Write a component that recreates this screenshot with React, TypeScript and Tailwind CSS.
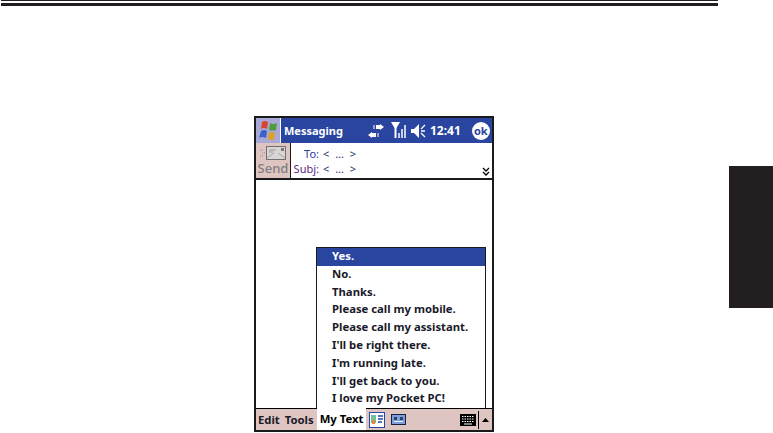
const font = "font-['Noto_Sans','Liberation_Sans',sans-serif]";

const replies = [
  'Yes.',
  'No.',
  'Thanks.',
  'Please call my mobile.',
  'Please call my assistant.',
  "I'll be right there.",
  "I'm running late.",
  "I'll get back to you.",
  'I love my Pocket PC!',
];

function WindowsFlag() {
  return (
    <svg width="21" height="21" viewBox="0 0 21 21">
      <path d="M4 2 Q7 0 10 2 L9 9 Q6 7 3 9 Z" fill="#d8452c" />
      <path d="M12 3 Q15 5 19 3 L18 10 Q14 11 11 10 Z" fill="#4e9a3c" />
      <path d="M3 11 Q6 9 9 11 L8 18 Q4 16 1 18 Z" fill="#3a62c4" />
      <path d="M11 12 Q14 13 17 12 L16 19 Q13 21 10 19 Z" fill="#e0a020" />
    </svg>
  );
}

function TitleIcons() {
  return (
    <>
      <svg width="16" height="14" viewBox="0 0 16 14" className="ml-[14px] text-white">
        <path d="M8 1 L12 1 L12 0 L16 3 L12 6 L12 5 L8 5 Z M8 9 L4 9 L4 8 L0 11 L4 14 L4 13 L8 13 Z" fill="currentColor" />
        <path d="M5 2 L7 2 M5 4 L7 4 M9 10 L11 10 M9 12 L11 12" stroke="currentColor" strokeWidth="1.2" />
      </svg>
      <svg width="15" height="17" viewBox="0 0 15 17" className="ml-[7px]">
        <path d="M0 0 L9 0 L5.5 6 L5.5 16 L3.5 16 L3.5 6 Z" fill="#fff" />
        <rect x="7" y="11" width="2" height="5" fill="#c5cfec" />
        <rect x="10" y="7" width="2" height="9" fill="#c5cfec" />
        <rect x="13" y="3" width="2" height="13" fill="#c5cfec" />
      </svg>
      <svg width="15" height="14" viewBox="0 0 15 14" className="ml-[5px]">
        <path d="M0 5 L3 5 L8 0 L8 14 L3 9 L0 9 Z" fill="#fff" />
        <path d="M14 1 L10 5 M10 7 L14 7 M10 9 L14 13" stroke="#fff" strokeWidth="1.3" fill="none" />
      </svg>
    </>
  );
}

function SendIcon() {
  return (
    <svg width="26" height="15" viewBox="0 0 26 15">
      <rect x="6.5" y="0.5" width="19" height="13" fill="#d9d5d5" stroke="#6f6f6f" />
      <path d="M7 12 L14 7 M25 12 L18 7" fill="none" stroke="#a5a5a5" />
      <rect x="21" y="2" width="3" height="3" fill="#777" />
      <path d="M9 4 H16 M9 6 H13" stroke="#999" />
      <path d="M0 4 H4 M2 7 H5 M0 10 H4" stroke="#8f8f8f" strokeDasharray="1 1" />
    </svg>
  );
}

function BottomIcons() {
  return (
    <div className="flex flex-1 items-center bg-[#dfc5c1] border-t border-black h-full">
      <svg width="16" height="16" viewBox="0 0 16 16" className="ml-[3px]">
        <rect x="0.5" y="0.5" width="15" height="15" fill="#fff" stroke="#2a45a8" />
        <rect x="2" y="3" width="5" height="8" fill="#6fc39a" />
        <rect x="3" y="8" width="3" height="4" fill="#e8843c" />
        <path d="M9 4 H14 M9 7 H14 M9 10 H13" stroke="#2a45a8" strokeWidth="1.4" />
      </svg>
      <svg width="15" height="11" viewBox="0 0 15 11" className="ml-[6px]">
        <rect x="0" y="0" width="15" height="11" fill="#16213a" />
        <rect x="1" y="1" width="13" height="9" fill="#7f9fdc" />
        <rect x="3" y="3" width="3" height="3" fill="#28406e" />
        <rect x="9" y="3" width="3" height="3" fill="#28406e" />
        <rect x="3" y="7" width="9" height="1" fill="#e8eefa" />
      </svg>
      <svg width="16" height="12" viewBox="0 0 16 12" className="ml-auto mr-[2px]">
        <rect width="16" height="12" fill="#000" />
        <path d="M2 2.5 H14 M2 5 H14 M2 7.5 H14" stroke="#fff" strokeDasharray="1.5 1" />
        <path d="M4 10 H12" stroke="#fff" />
      </svg>
      <div className="flex h-[18px] w-[14px] items-center justify-center border-l border-black">
        <svg width="7" height="4" viewBox="0 0 7 4">
          <path d="M3.5 0 L7 4 L0 4 Z" fill="#000" />
        </svg>
      </div>
    </div>
  );
}

export default function App() {
  return (
    <div className={`w-[773px] h-[433px] overflow-hidden bg-white ${font}`}>
      {/* page rules */}
      <div className="ml-[1px] w-[717px] h-px bg-[#231f20]" />
      <div className="ml-[1px] mt-[2px] w-[717px] h-[3px] bg-[#231f20]" />

      <div className="flex items-start">
        {/* device */}
        <div className="relative ml-[254px] mt-[110px] flex h-[316px] w-[240px] flex-col border-x-2 border-t-2 border-b-2 border-[#1a1a1a] bg-white">
          <div className="flex h-[25px] items-center bg-[#2a459f] text-white">
            <div className="flex h-full w-[25px] items-center justify-center border-r border-white bg-[#a9a9d8]">
              <WindowsFlag />
            </div>
            <span className="ml-[3px] w-[70px] text-[11px] font-bold leading-none">Messaging</span>
            <TitleIcons />
            <span className="ml-[4px] text-[12px] font-bold leading-none">12:41</span>
            <span className="ml-[11px] flex h-[18px] w-[18px] items-center justify-center rounded-full bg-white text-[11px] font-bold leading-none text-[#2a459f]">
              ok
            </span>
          </div>

          <div className="flex h-[37px] border-b-2 border-[#1a1a1a]">
            <div className="flex w-[35px] flex-col items-center border-r border-[#1a1a1a] bg-[#dfc5c1] pt-[3px] text-[#7f7f7f]">
              <SendIcon />
              <span className="mt-px text-[13px] font-medium leading-none">Send</span>
            </div>
            <div className="relative flex-1 pt-[3px] text-[11px] leading-[15px]">
              <div className="flex">
                <span className="w-[28px] text-right text-[#2a3a9f]">To:</span>
                <span className="ml-[4px] text-[#26306a] [word-spacing:3px]">&lt; ... &gt;</span>
              </div>
              <div className="flex">
                <span className="w-[28px] whitespace-nowrap text-right text-[#5a2a7f]">Subj:</span>
                <span className="ml-[4px] text-[#26306a] [word-spacing:3px]">&lt; ... &gt;</span>
              </div>
              <svg width="8" height="9" viewBox="0 0 8 9" className="absolute bottom-[2px] right-[2px]">
                <path d="M1 1 L4 4 L7 1 M1 5 L4 8 L7 5" fill="none" stroke="#000" strokeWidth="1.3" />
              </svg>
            </div>
          </div>

          <div className="flex-1" />

          <div className="flex h-[22px] items-stretch text-[11.3px] font-bold leading-none text-black">
            <div className="flex w-[61px] items-center border-t border-black bg-[#dfc5c1] pl-[2px] text-[#1a1a2a]">
              <span>Edit</span>
              <span className="ml-[5px]">Tools</span>
            </div>
            <div className="flex w-[49px] items-center justify-center whitespace-nowrap bg-white">My Text</div>
            <BottomIcons />
          </div>

          {/* my text popup */}
          <div className="absolute left-[60px] top-[129px] w-[170px] border border-[#1a1a1a] border-b-0 bg-white text-[11.3px] font-bold leading-[15px] text-[#1a1a2a]">
            {replies.map((reply, i) => (
              <div
                key={reply}
                className={`h-[17.8px] pl-[15px] ${i === 0 ? 'bg-[#2a459f] text-white' : ''}`}
              >
                {reply}
              </div>
            ))}
          </div>
        </div>

        {/* side tab */}
        <div className="ml-[235px] mt-[160px] h-[142px] w-[44px] bg-[#231f20]" />
      </div>
    </div>
  );
}
